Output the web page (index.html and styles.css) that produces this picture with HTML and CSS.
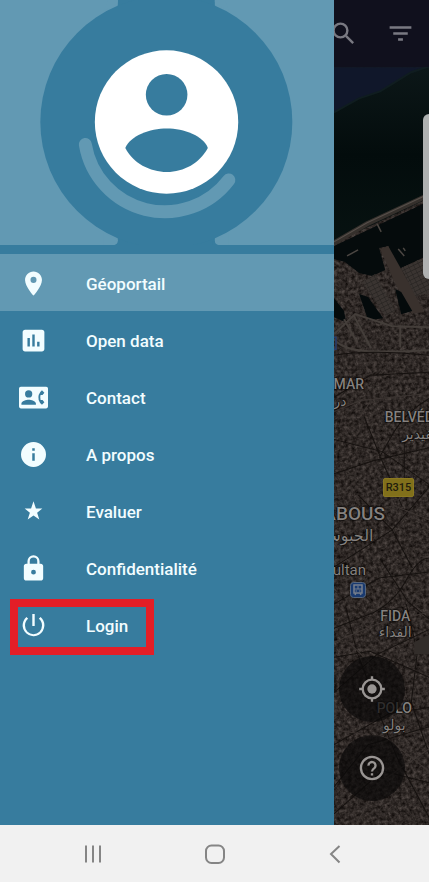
FILE: index.html
```
<!DOCTYPE html>
<html lang="fr">
<head>
<meta charset="utf-8">
<meta name="viewport" content="width=device-width, initial-scale=1">
<title>Géoportail</title>
<link rel="stylesheet" href="styles.css">
</head>
<body>
<div class="screen">
  <aside class="drawer">
    <header class="profile">
      <svg class="profile-art" viewBox="0 0 334 245" preserveAspectRatio="xMidYMid slice" aria-hidden="true">
        <rect class="dark" x="118" y="0" width="97" height="245"/>
        <circle class="dark" cx="166.5" cy="122" r="126"/>
        <path class="light" d="M108 0H118V2Q118 4 115 5L104 11ZM225 0H215V2Q215 4 218 5L229 11ZM104 233L115 238Q118 239 118 241.500Q118 245 114 245H104ZM229 233L218 238Q215 239 215 241.500Q215 245 219 245H229Z"/>
        <path class="dark" d="M112 245.500Q118 245 118 241H120V245.500ZM221 245.500Q215 245 215 241H213V245.500Z"/>
        <path class="arc" d="M85.5 144.5A80.5 80.5 0 0 0 229 180"/>
        <circle class="white" cx="166.7" cy="122" r="71.7"/>
        <circle class="dark" cx="166.8" cy="94.7" r="20.8"/>
        <path class="dark" d="M125.5 148C130 136 150 128.500 167 128.500S204 136 208 148C200 163 184 172 167 172S133 163 125.500 148Z"/>
      </svg>
    </header>
    <nav>
      <ul class="menu">
        <li><a class="item active" href="#geoportail"><svg class="icon" viewBox="0 0 24 24"><path d="M12 2C8.130 2 5 5.130 5 9c0 5.250 7 13 7 13s7-7.750 7-13c0-3.870-3.130-7-7-7zm0 9.500a2.500 2.500 0 1 1 0-5 2.500 2.500 0 0 1 0 5z"/></svg>Géoportail</a></li>
        <li><a class="item" href="#open-data"><svg class="icon" viewBox="0 0 24 24"><path d="M19 3H5c-1.100 0-2 .9-2 2v14c0 1.100.9 2 2 2h14c1.100 0 2-.9 2-2V5c0-1.100-.9-2-2-2zM9 17H7v-7h2v7zm4 0h-2V7h2v10zm4 0h-2v-4h2v4z"/></svg>Open data</a></li>
        <li><a class="item" href="#contact"><svg class="icon" viewBox="0 0 24 24"><path fill-rule="evenodd" d="M1.500 3h21A1.500 1.500 0 0 1 24 4.500v15a1.500 1.500 0 0 1-1.500 1.500h-21A1.500 1.500 0 0 1 0 19.500v-15A1.500 1.500 0 0 1 1.500 3zM8 6a3 3 0 1 0 0 6 3 3 0 0 0 0-6zm6 12v-1c0-2-4-3.100-6-3.100S2 15 2 17v1zm3.850-4a6.500 6.500 0 0 1 0-4h1.640L21 8l-1.990-1.990A7.900 7.900 0 0 0 16.280 10a8 8 0 0 0 0 4 7.900 7.900 0 0 0 2.730 3.990L21 16l-1.510-2z"/></svg>Contact</a></li>
        <li><a class="item" href="#a-propos"><svg class="icon round" viewBox="0 0 24 24"><path d="M12 0a12 12 0 1 0 0 24 12 12 0 0 0 0-24zm1.200 18h-2.400v-7.200h2.400V18zm0-9.600h-2.400V6h2.400v2.400z"/></svg>A propos</a></li>
        <li><a class="item" href="#evaluer"><svg class="icon" viewBox="0 0 24 24"><path d="M12 3.500l2 6.100h5.300l-4.300 3.500 1.800 5.600L12 15.300l-4.800 3.400 1.800-5.600-4.300-3.500h5.300z"/></svg>Evaluer</a></li>
        <li><a class="item" href="#confidentialite"><svg class="icon" viewBox="0 0 24 24"><path d="M18 8h-1V6A5 5 0 0 0 7 6v2H6c-1.100 0-2 .9-2 2v10c0 1.100.9 2 2 2h12c1.100 0 2-.9 2-2V10c0-1.100-.9-2-2-2zm-6 9a2 2 0 1 1 0-4 2 2 0 0 1 0 4zm3.100-9H8.900V6a3.100 3.100 0 0 1 6.200 0v2z"/></svg>Confidentialité</a></li>
        <li><a class="item marked" href="#login"><svg class="icon" viewBox="0 0 24 24"><path d="M13 2.500h-2v10h2v-10zm4.830 2.500l-1.420 1.420A7 7 0 0 1 19 12.300a7 7 0 1 1-14 0 7 7 0 0 1 2.590-5.880L6.170 5A9 9 0 1 0 21 12.300a9 9 0 0 0-3.170-7.300z"/></svg>Login</a></li>
      </ul>
    </nav>
  </aside>

  <main class="map">
    <svg class="terrain" viewBox="0 0 95 825" preserveAspectRatio="xMinYMin slice" aria-hidden="true">
      <defs>
        <filter id="city" x="0" y="0" width="100%" height="100%" color-interpolation-filters="sRGB">
          <feTurbulence type="fractalNoise" baseFrequency=".28" numOctaves="3" seed="8"/>
          <feColorMatrix values=".36 0 0 0 .01  .34 0 0 0 -.005  .33 0 0 0 -.01  0 0 0 0 1"/>
        </filter>
        <linearGradient id="water" x1="0" y1="0" x2="0" y2="1">
          <stop offset="0" stop-color="#0c1718"/>
          <stop offset=".5" stop-color="#030c0c"/>
          <stop offset="1" stop-color="#071211"/>
        </linearGradient>
        <pattern id="blocks" width="11" height="9" patternUnits="userSpaceOnUse" patternTransform="rotate(-24)">
          <path d="M0 0H11M0 0V9M5 2V8M6 5H11" fill="none" stroke="#15110f" stroke-width="1"/>
          <path d="M1 1H4V4" fill="none" stroke="#4b4340" stroke-width=".6"/>
        </pattern>
        <pattern id="rows" width="5" height="4" patternUnits="userSpaceOnUse" patternTransform="rotate(-26)">
          <path d="M0 0H5M0 0V4" fill="none" stroke="#252220"/>
        </pattern>
      </defs>
      <rect width="95" height="825" filter="url(#city)"/>
      <rect y="300" width="95" height="525" fill="url(#blocks)" opacity=".35"/>
      <path fill="url(#water)" d="M0 67H95V197L0 242Z"/>
      <path d="M0 67H95L77 72L46 91L25 98L0 112Z" fill="#10172a"/>
      <path d="M0 112L25 98L46 91L77 72L95 66" fill="none" stroke="#101d20" stroke-width="2"/>
      <path d="M0 245L95 200V262L90 256L67 267L66 275L54 245L45 247L51 269L38 275L25 272L11 261L0 258Z" fill="#050b0c"/>
      <path d="M0 242L33 223L95 194" fill="none" stroke="#35302c" stroke-width="5"/>
      <path d="M0 241L33 222L95 193" fill="none" stroke="#57504b" stroke-width="1"/>
      <path d="M43 223L47 231M13 255L24 249M64 248L70 255M69 247L71 250" stroke="#4b4642" stroke-width="1.500"/>
      <path d="M46 248L54 245L73 279L90 311L77 312L59 278Z" fill="#39312d"/>
      <path d="M28 281L41 273L61 310L51 315ZM67 267L91 256L95 264V292L81 295Z" fill="#3a3431"/>
      <path d="M28 281L41 273L61 310L51 315ZM67 267L91 256L95 264V292L81 295Z" fill="url(#rows)"/>
      <path d="M0 297L10 310L12 321L0 316ZM25 293L34 296L49 317L34 319ZM61 288L67 291L78 310L67 313Z" fill="#040a0b"/>
      <path d="M10 318L23 341M20 315L37 347M0 338Q9 349 35 350T95 349M0 333L21 313L58 325L95 326M66 324L66 346" fill="none" stroke="#443e3a" stroke-width="2"/>
      <g fill="none" stroke="#15110f" stroke-width="1">
        <path d="M0 354Q34 348 95 354M0 396L36 374L95 371M30 415L46 455L68 505M95 397Q72 410 60 430L45 456M0 472L39 459L95 446M0 438L48 450L95 483M70 437V475M0 565L58 528L95 485M0 602L45 576L95 570M24 493L58 528L78 566M0 626L40 610Q60 600 72 578T95 556M46 557L74 600L95 617M0 690L43 652L95 627M0 655L36 649L95 675M0 742L55 711L95 705M0 784L34 742L95 724M12 606L23 650L40 695M72 602L83 650L77 700L95 752M0 811L48 768L95 780M42 704L63 755L95 815"/>
      </g>
      <g fill="none" stroke="#3d3633">
        <path d="M0 410L26 399L95 392M26 415L35 402M0 516L60 504L95 518M64 498L81 475M0 640L42 622L95 610M15 640L37 662M0 727L52 735L95 769M20 825L45 780L95 746"/>
      </g>
      <path d="M80 640L95 632V652H80Z" fill="#322d2a"/>
      <path d="M0 336H2V348H0" fill="none" stroke="#273a68" stroke-width="1.500"/>
    </svg>

    <div class="label mar">MAR<br><span lang="ar">در</span></div>
    <div class="label belvedere">BELVÉDÈRE<br><span lang="ar" dir="rtl">بلفيدير</span></div>
    <div class="road">R315</div>
    <div class="label habous">HABOUS<br><span lang="ar">الحبوس</span></div>
    <div class="label sultan">Sultan</div>
    <svg class="station" viewBox="0 0 16 16" aria-hidden="true"><rect x=".5" y=".5" width="15" height="15" rx="3" fill="#193a70" stroke="#56667d"/><path d="M4 3H12V11H4ZM5 13L6 11M11 13L10 11" fill="none" stroke="#777f8c" stroke-width="1.500"/><path d="M4 7H12M8 4V7" stroke="#777f8c"/><path d="M5.500 9H7M9 9H10.500" stroke="#777f8c"/></svg>
    <div class="label fida">FIDA<br><span lang="ar">الفداء</span></div>
    <div class="label polo">POLO<br><span lang="ar">بولو</span></div>

    <div class="toolbar">
      <button type="button" aria-label="Rechercher"><svg viewBox="0 0 24 24"><circle cx="9.500" cy="9.500" r="5.700"/><path d="M14 14L20 20"/></svg></button>
      <button type="button" aria-label="Filtrer"><svg viewBox="0 0 24 24"><path d="M3 7H21M6 12H18M10 17H14"/></svg></button>
    </div>
    <div class="edge-handle"></div>
    <div class="actions">
      <button type="button" aria-label="Ma position"><svg viewBox="0 0 24 24"><circle cx="12" cy="12" r="8"/><circle class="dot" cx="12" cy="12" r="4"/><path d="M12 1V4M12 20V23M1 12H4M20 12H23"/></svg></button>
      <button type="button" aria-label="Aide"><svg viewBox="0 0 24 24"><circle cx="12" cy="12" r="9.500"/><path d="M9 10A3 3 0 1 1 14 12.100Q12 13.500 12 15M12 16.500V18.500"/></svg></button>
    </div>
  </main>

  <nav class="system-bar">
    <button type="button" aria-label="Applications récentes"><svg viewBox="0 0 24 24"><path d="M4 3.500V20.500M11 3.500V20.500M18 3.500V20.500"/></svg></button>
    <button type="button" aria-label="Accueil"><svg viewBox="0 0 24 24"><rect x="3" y="3.500" width="18" height="17.500" rx="5.500"/></svg></button>
    <button type="button" aria-label="Retour"><svg viewBox="0 0 24 24"><path d="M16.500 4L8 12L16.500 20.500"/></svg></button>
  </nav>
</div>
</body>
</html>
```

FILE: styles.css
```
*,
*::after {
  box-sizing: border-box;
}

body {
  margin: 0;
  font-family: Roboto, "DejaVu Sans", sans-serif;
}

button {
  display: grid;
  place-items: center;
  padding: 0;
  border: 0;
  background: none;
}

svg {
  display: block;
}

.screen {
  display: grid;
  grid-template-columns: 7fr 2fr;
  grid-template-rows: 1fr auto;
  min-height: 100vh;
}

.drawer {
  background: #377c9e;
  color: #f2fdff;
}

.profile {
  border-bottom: 9px solid #377c9e;
  background: #6299b3;
}

.profile-art {
  width: 100%;
  height: 245px;
}

.dark {
  fill: #377c9e;
}

.light {
  fill: #6299b3;
}

.white {
  fill: #fff;
}

.arc {
  fill: none;
  stroke: #6299b3;
  stroke-width: 13;
  stroke-linecap: round;
}

.menu {
  margin: 0;
  padding: 0;
  list-style: none;
}

.item {
  position: relative;
  display: flex;
  align-items: center;
  gap: 38px;
  height: 57px;
  padding: 2px 19px 0;
  color: inherit;
  font-size: 17px;
  font-weight: 500;
  text-decoration: none;
}

.active {
  background: #6299b3;
}

.icon {
  width: 29px;
  height: 29px;
  fill: currentColor;
}

.round {
  width: 25px;
  height: 25px;
  margin: 0 2px;
}

.marked::after {
  content: "";
  position: absolute;
  top: 3px;
  left: 10px;
  width: 144px;
  height: 56px;
  border: 8px solid #e31e27;
}

.map {
  position: relative;
  overflow: hidden;
  background: #28211f;
}

.terrain {
  position: absolute;
  inset: 0;
  width: 100%;
  height: 100%;
}

.label {
  position: absolute;
  color: #85817f;
  font-size: 14px;
  font-weight: 500;
  line-height: 17px;
  text-align: center;
  white-space: nowrap;
  text-shadow: 0 0 2px #000, 0 0 2px #000;
}

.mar {
  top: 376px;
  right: 65px;
  text-align: left;
}

.belvedere {
  top: 409px;
  left: 51px;
}

.habous {
  top: 503px;
  right: 44px;
  font-size: 19px;
  line-height: 21px;
}

.habous span {
  font-size: 16px;
}

.sultan {
  top: 562px;
  right: 63px;
  font-size: 15px;
  font-weight: 400;
}

.fida {
  top: 608px;
  left: 45px;
  line-height: 16px;
}

.polo {
  top: 700px;
  left: 43px;
}

.road {
  position: absolute;
  top: 478px;
  left: 49px;
  padding: 0 2px;
  border: 1px solid #8b7920;
  border-radius: 2px;
  background: #81701b;
  color: #211d0d;
  font-size: 11px;
  font-weight: 500;
  line-height: 17px;
}

.station {
  position: absolute;
  top: 582px;
  left: 16px;
  width: 16px;
  height: 16px;
}

.toolbar {
  position: relative;
  display: flex;
  justify-content: space-between;
  height: 67px;
  padding-right: 14px;
  background: #10101d;
}

.toolbar button {
  width: 29px;
  margin-left: -5px;
}

.toolbar svg {
  width: 29px;
  height: 29px;
  fill: none;
  stroke: #797982;
  stroke-width: 2;
}

.edge-handle {
  position: absolute;
  top: 114px;
  right: 0;
  width: 6px;
  height: 165px;
  border-radius: 6px 0 0 6px;
  background: #afb1b1;
}

.actions {
  position: absolute;
  bottom: 24px;
  left: 5px;
  display: grid;
  gap: 13px;
}

.actions button {
  width: 66px;
  height: 66px;
  border-radius: 50%;
  background: rgb(10 8 8 / 70%);
}

.actions svg {
  width: 28px;
  height: 28px;
  fill: none;
  stroke: #999593;
  stroke-width: 2;
}

.actions .dot {
  fill: #999593;
  stroke: none;
}

.system-bar {
  grid-column: 1 / -1;
  display: grid;
  grid-template-columns: repeat(3, 1fr);
  place-items: center;
  height: 57px;
  padding: 1px 8% 0;
  background: #f1f1f1;
}

.system-bar svg {
  width: 24px;
  height: 24px;
  fill: none;
  stroke: #858585;
  stroke-width: 2;
}

.system-bar button {
  width: 24px;
  height: 48px;
}
```
